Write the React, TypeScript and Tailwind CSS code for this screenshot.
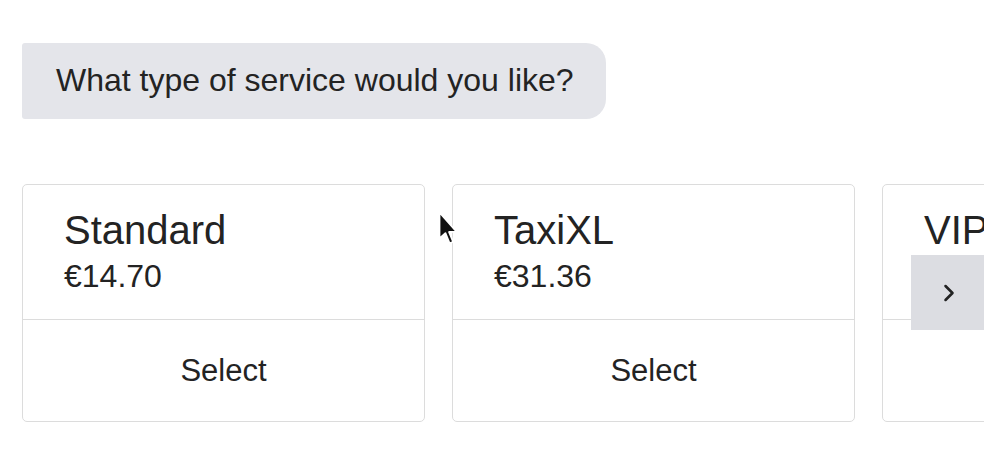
import { ChevronRight } from "lucide-react";

type Service = {
  name: string;
  price: string;
};

const services: Service[] = [
  { name: "Standard", price: "€14.70" },
  { name: "TaxiXL", price: "€31.36" },
  { name: "VIP", price: "€45.10" },
];

export default function App() {
  return (
    <div
      className="relative w-[984px] h-[456px] overflow-hidden bg-white text-[#232323]"
      style={{ fontFamily: '"Liberation Sans", Arial, Helvetica, sans-serif' }}
    >
      {/* bot message */}
      <div className="pt-[43px] pl-[22px]">
        <div className="w-[584px] h-[76px] bg-[#e4e5ea] rounded-l-[3px] rounded-r-[20px] pl-[34px] pt-[18px] text-[32px] leading-[1.2] whitespace-nowrap">
          What type of service would you like?
        </div>
      </div>

      {/* carousel */}
      <div className="mt-[65px] pl-[22px] flex gap-[27px]">
        {services.map((s) => (
          <ServiceCard key={s.name} service={s} />
        ))}
      </div>

      {/* next arrow */}
      <button className="absolute left-[911px] top-[255px] w-[80px] h-[75px] bg-[#dcdde2] flex items-center pl-[24px] text-[#222]">
        <ChevronRight size={28} strokeWidth={2.2} />
      </button>

      {/* mouse pointer */}
      <Cursor />
    </div>
  );
}

function ServiceCard({ service }: { service: Service }) {
  return (
    <div className="shrink-0 w-[403px] h-[238px] border border-[#dcdcdc] rounded-[5px] flex flex-col">
      <div className="h-[135px] pl-[41px] pt-[21px] border-b border-[#dcdcdc]">
        <div className="text-[40px] leading-[48px]">{service.name}</div>
        <div className="mt-[3px] text-[32px] leading-[1.2]">{service.price}</div>
      </div>
      <div className="flex-1 pt-[32px] text-center text-[31px] leading-[1.2]">
        Select
      </div>
    </div>
  );
}

function Cursor() {
  return (
    <svg
      className="absolute left-[437px] top-[210px]"
      width="24"
      height="38"
      viewBox="0 0 20 32"
    >
      <path
        d="M2 2 L2 24 L7 19.5 L10.5 28 L13.5 26.8 L10 18.5 L16.5 18.5 Z"
        fill="#111"
        stroke="#fff"
        strokeWidth="1.5"
        strokeLinejoin="round"
      />
    </svg>
  );
}
